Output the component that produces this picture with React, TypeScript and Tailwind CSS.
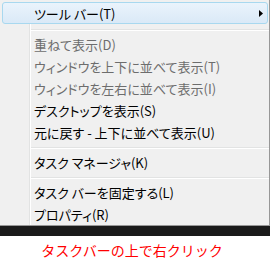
import React from "react";

function Gutter() {
  return (
    <div className="flex h-full shrink-0">
      <div className="w-[29px] h-full" />
      <div className="w-px h-full bg-[#e2e3e3]" />
      <div className="w-px h-full bg-white" />
    </div>
  );
}

function Item({ label, disabled }: { label: string; disabled?: boolean }) {
  return (
    <div className="flex h-[22px] items-center">
      <Gutter />
      <div
        className={
          "pl-[3px] text-[13px] leading-none whitespace-nowrap " +
          (disabled ? "text-[#6d6d6d]" : "text-black")
        }
      >
        {label}
      </div>
    </div>
  );
}

function Sep({ h, top }: { h: string; top: string }) {
  return (
    <div className={"flex " + h}>
      <Gutter />
      <div className={"flex-1 flex flex-col " + top}>
        <div className="h-px bg-[#e2e3e3]" />
        <div className="h-px bg-white" />
      </div>
    </div>
  );
}

export default function App() {
  return (
    <div className="w-[270px] h-[264px] bg-white flex flex-col">
      <div className="bg-[#f0f0f0] border-r border-b border-[#979797] pt-[2px] [font-family:'Noto_Sans_CJK_JP',sans-serif] [font-feature-settings:'palt']">
        <div className="ml-[2px] mr-px h-[22px] rounded-[3px] border border-[#a8d8ef] bg-gradient-to-b from-[#eaf3fc] to-[#dae9f7] flex items-center pl-[31px] pr-[4px]">
          <span className="text-[13px] leading-none text-black whitespace-nowrap">
            ツール バー(T)
          </span>
          <svg className="ml-auto" width="4" height="7" viewBox="0 0 4 7">
            <polygon points="0,0 4,3.5 0,7" fill="#000" />
          </svg>
        </div>
        <Sep h="h-[9px]" top="pt-[5px]" />
        <Item label="重ねて表示(D)" disabled />
        <Item label="ウィンドウを上下に並べて表示(T)" disabled />
        <Item label="ウィンドウを左右に並べて表示(I)" disabled />
        <Item label="デスクトップを表示(S)" />
        <Item label="元に戻す - 上下に並べて表示(U)" />
        <Sep h="h-[8px]" top="pt-[4px]" />
        <Item label="タスク マネージャ(K)" />
        <Sep h="h-[8px]" top="pt-[4px]" />
        <Item label="タスク バーを固定する(L)" />
        <Item label="プロパティ(R)" />
      </div>
      <div className="h-[10px] bg-[#1a1a1a]" />
      <div className="flex-1 flex items-center justify-center [font-family:'Noto_Sans_CJK_JP',sans-serif] text-[14px] leading-none text-[#ff0000] pr-[6px]">
        タスクバーの上で右クリック
      </div>
    </div>
  );
}
